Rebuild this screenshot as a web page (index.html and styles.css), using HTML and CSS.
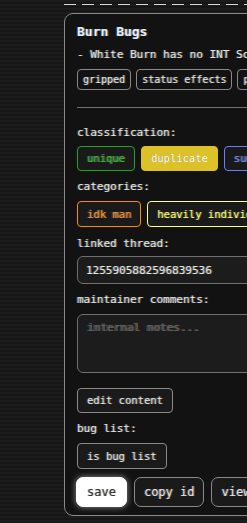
FILE: index.html
```html
<!DOCTYPE html>
<html lang="en">
<head>
  <meta charset="UTF-8" />
  <title>Bug Review</title>
  <meta name="viewport" content="width=device-width, initial-scale=1.0">
  <link rel="stylesheet" href="styles.css">
</head>
<body>
  <div class="page">
    <div class="divider"></div>

    <div class="card">
      <h2 class="title">Burn Bugs</h2>
      <div class="desc">- White Burn has no INT Scaling</div>

      <div class="tags">
        <span class="tag">gripped</span>
        <span class="tag">status effects</span>
        <span class="tag">passives</span>
      </div>

      <hr class="rule">

      <div class="label first">classification:</div>
      <div class="opts">
        <button class="opt green">unique</button>
        <button class="opt yellow-fill">duplicate</button>
        <button class="opt blue">suggestion</button>
      </div>

      <div class="label">categories:</div>
      <div class="opts loose">
        <button class="opt tall orange">idk man</button>
        <button class="opt tall yellow">heavily individual</button>
      </div>

      <div class="label spaced">linked thread:</div>
      <input class="field" type="text" value="1255905882596839536">

      <div class="label">maintainer comments:</div>
      <textarea class="field notes" placeholder="internal notes..."></textarea>

      <button class="opt edit">edit content</button>

      <div class="label">bug list:</div>
      <div class="opts loose">
        <button class="opt tall">is bug list</button>
      </div>

      <div class="actions">
        <button class="act save">save</button>
        <button class="act">copy id</button>
        <button class="act">view thread</button>
      </div>
    </div>
  </div>
</body>
</html>
```

FILE: styles.css
```css
html, body {
  overflow: hidden;
}

body {
  margin: 0;
  background: repeating-linear-gradient(#1c1c1c 0 2px, #161616 2px 4px);
  color: #e6e6e6;
  font-family: "DejaVu Sans Mono", "Liberation Mono", monospace;
  text-shadow: -1px 0 rgba(40, 140, 255, 0.45), 1px 0 rgba(255, 170, 0, 0.45);
}

.page {
  padding: 4px 0 0 64px;
  width: 330px;
}

.divider {
  height: 1px;
  background: repeating-linear-gradient(90deg, #d8d8d8 0 12px, transparent 12px 18px);
}

.card {
  margin-top: 8px;
  background: #121212;
  border: 1px solid #8a8a8a;
  border-radius: 9px;
  padding: 10px 12px 8px;
}

.title {
  margin: 0;
  font-size: 13px;
  line-height: 16px;
  font-weight: bold;
  color: #e4ecff;
}

.desc {
  margin-top: 8px;
  font-size: 11px;
  line-height: 14px;
  white-space: nowrap;
}

.tags {
  display: flex;
  gap: 5px;
  margin-top: 7px;
}

.tag {
  border: 1px solid #8a8a8a;
  border-radius: 4px;
  padding: 0 5px;
  font-size: 10px;
  line-height: 19px;
  white-space: nowrap;
}

.rule {
  border: 0;
  border-top: 1px solid #707070;
  margin: 17px 0 0;
}

.label {
  font-size: 11px;
  line-height: 16px;
  margin-top: 8px;
}

.label.first {
  margin-top: 17px;
}

.label.spaced {
  margin-top: 9px;
}

.opts {
  display: flex;
  gap: 6px;
  margin-top: 5px;
}

.opts.loose {
  margin-top: 6px;
}

.opt {
  font-family: inherit;
  font-size: 10.5px;
  line-height: 23px;
  padding: 0 9px;
  background: #1a1a1a;
  color: #e6e6e6;
  text-shadow: inherit;
  border: 1px solid #8a8a8a;
  border-radius: 4px;
  white-space: nowrap;
}

.opt.tall {
  line-height: 24px;
}

.green {
  border-color: #1fa81f;
  color: #2cc02c;
}

.yellow-fill {
  background: #dcc228;
  border-color: #dcc228;
  color: #fffbe6;
}

.blue {
  border-color: #6c7cff;
  color: #7384ff;
}

.orange {
  border-color: #ff8c00;
  color: #ff8f1f;
}

.yellow {
  border-color: #ffff78;
  color: #ffff66;
}

.field {
  display: block;
  box-sizing: border-box;
  width: 100%;
  margin-top: 4px;
  background: #1c1c1c;
  border: 1px solid #707070;
  border-radius: 6px;
  color: #e6e6e6;
  text-shadow: inherit;
  font-family: inherit;
  font-size: 11px;
  height: 28px;
  padding: 0 8px;
}

.notes {
  height: 59px;
  margin-top: 6px;
  padding: 6px 9px;
  resize: none;
}

.notes::placeholder {
  color: #5e5e5e;
}

.edit {
  display: block;
  margin-top: 15px;
}

.actions {
  display: flex;
  gap: 7px;
  margin-top: 8px;
  margin-left: -1px;
}

.act {
  font-family: inherit;
  font-size: 12px;
  height: 30px;
  padding: 0 9px;
  background: #1a1a1a;
  color: #e6e6e6;
  text-shadow: inherit;
  border: 1px solid #8a8a8a;
  border-radius: 7px;
  white-space: nowrap;
}

.save {
  background: #ffffff;
  border-color: #ffffff;
  color: #333;
  padding: 0 10px;
  box-shadow: 0 0 6px rgba(255, 255, 255, 0.55);
}
```
